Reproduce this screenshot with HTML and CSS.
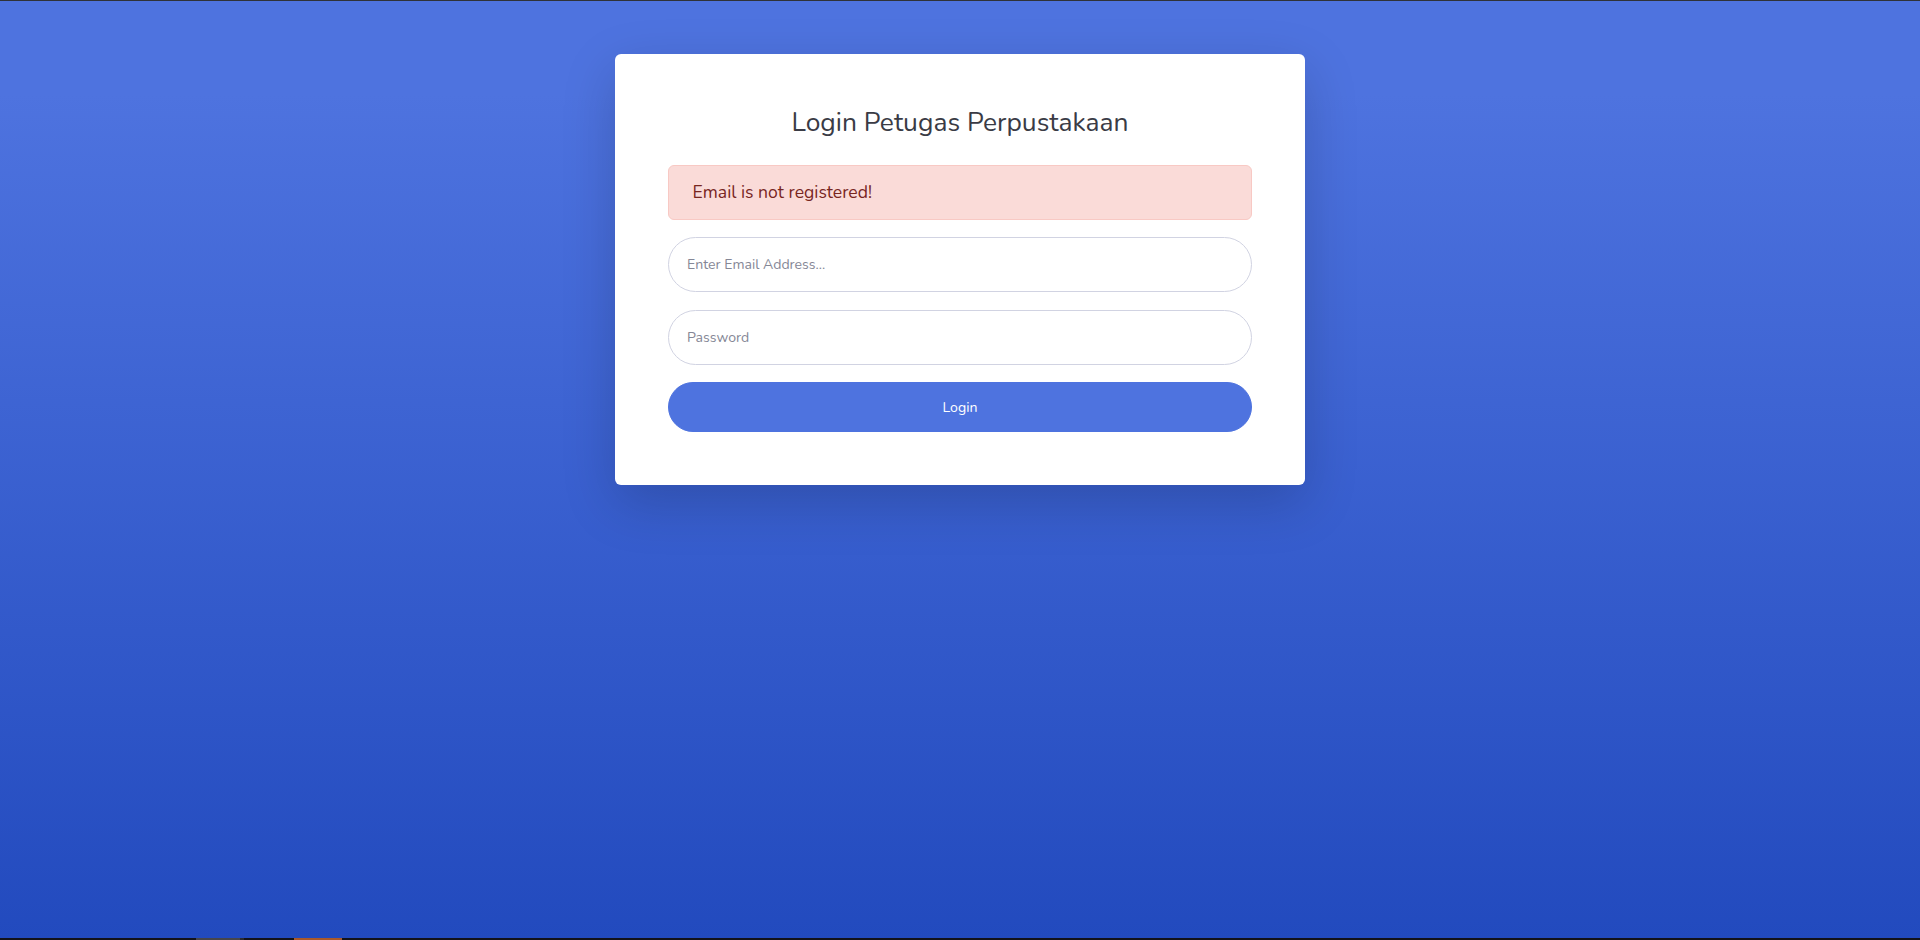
FILE: index.html
```html
<!DOCTYPE html>
<html lang="id">
<head>
<meta charset="utf-8">
<title>Login Petugas Perpustakaan</title>
<link rel="stylesheet" href="styles.css">
</head>
<body>
<div class="topline"></div>
<main class="page">
  <div class="card">
    <h1 class="title">Login Petugas Perpustakaan</h1>
    <div class="alert">Email is not registered!</div>
    <form class="form">
      <input class="field" type="email" placeholder="Enter Email Address...">
      <input class="field" type="password" placeholder="Password">
      <button class="btn" type="button">Login</button>
    </form>
  </div>
</main>
<div class="taskbar">
  <span class="tb-gray"></span><span class="tb-dark"></span><span class="tb-gap"></span><span class="tb-orange"></span>
</div>
</body>
</html>
```

FILE: styles.css
```css
* { box-sizing: border-box; }
html, body { margin: 0; padding: 0; height: 100%; }
body {
  font-family: Nunito, Lato, "Noto Sans", sans-serif;
  background: linear-gradient(180deg, #4e73df 10%, #224abe 100%);
  overflow: hidden;
}
.topline { height: 1px; background: #2f3238; }
.page {
  display: flex;
  justify-content: center;
  padding-top: 53px;
}
.card {
  width: 690px;
  background: #fff;
  border-radius: 6px;
  box-shadow: 0 17.6px 52.8px rgba(0,0,0,0.175);
  padding: 52.8px 53px 52.8px;
}
.title {
  margin: 0 0 26.4px;
  text-align: center;
  font-weight: 400;
  font-size: 26.4px;
  line-height: 31.7px;
  color: #3a3b45;
}
.alert {
  height: 54.8px;
  padding: 0 22px 0 23.5px;
  display: flex;
  align-items: center;
  background: #fadbd8;
  border: 1px solid #f8c9c4;
  border-radius: 6px;
  color: #78261f;
  font-size: 17.6px;
  margin-bottom: 17.6px;
}
.form { display: flex; flex-direction: column; gap: 17.6px; }
.field {
  display: block;
  width: 100%;
  height: 55px;
  border: 1px solid #d1d3e2;
  border-radius: 200px;
  padding: 0 18px;
  font-family: inherit;
  font-size: 14.08px;
  color: #6e707e;
  background: #fff;
  outline: none;
}
.field::placeholder { color: #858796; opacity: 1; }
.btn {
  display: block;
  width: 100%;
  height: 49.7px;
  border: 1px solid #4e73df;
  border-radius: 200px;
  background: #4e73df;
  color: #fff;
  font-family: inherit;
  font-size: 14.08px;
  cursor: pointer;
}
.taskbar {
  position: fixed;
  left: 0; right: 0; bottom: 0;
  height: 2px;
  background: #13131a;
  display: flex;
}
.taskbar span { display: block; height: 2px; }
.tb-gray { margin-left: 196px; width: 44px; background: #46464c; }
.tb-dark { width: 4px; background: #2a2a30; }
.tb-gap { width: 50px; }
.tb-orange { width: 48px; background: #a9592a; }
```
